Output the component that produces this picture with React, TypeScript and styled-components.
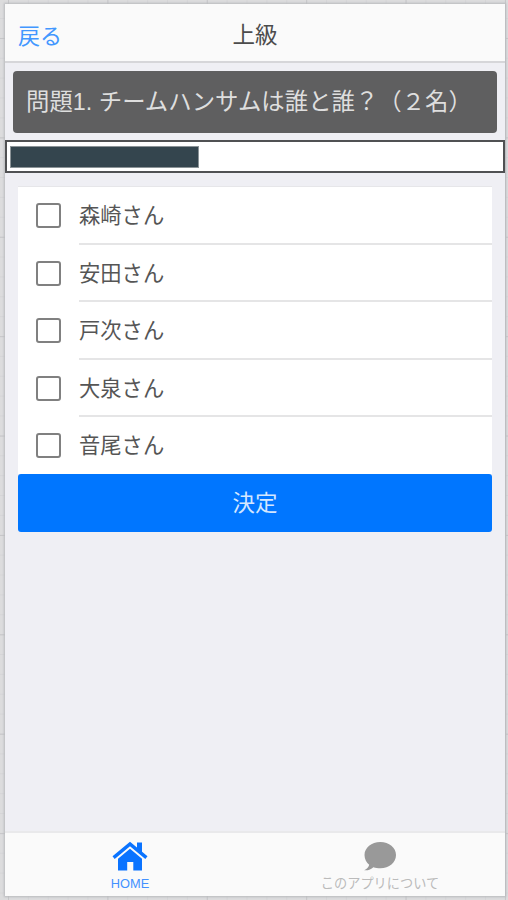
import React, { useState } from "react";
import styled, { createGlobalStyle } from "styled-components";

const GlobalStyle = createGlobalStyle`
  * { box-sizing: border-box; }
  body {
    margin: 0;
    background: #dcdcde;
    font-family: "Liberation Sans", "Noto Sans CJK JP", sans-serif;
    font-weight: 400;
  }
  button { font: inherit; border: 0; background: none; padding: 0; margin: 0; }
`;

const Desk = styled.div`
  width: 508px;
  height: 900px;
  padding: 4px 3px 4px 5px;
  background-color: #dcdcdd;
  background-image:
    linear-gradient(to bottom, #c6c6c8 1px, transparent 1px),
    linear-gradient(to right, #c6c6c8 1px, transparent 1px),
    linear-gradient(to bottom, #d5d5d7 1px, transparent 1px),
    linear-gradient(to right, #d5d5d7 1px, transparent 1px);
  background-size: 100% 99.4px, 99.4px 100%, 100% 19.88px, 19.88px 100%;
  background-position: 0 38px, 8px 0, 0 18px, 8px 0;
  overflow: hidden;
`;

const Screen = styled.main`
  display: flex;
  flex-direction: column;
  height: 892px;
  background: #efeff4;
  box-shadow: 0 0 2px 1px #b9babd;
`;

const NavBar = styled.header`
  display: grid;
  grid-template-columns: 1fr auto 1fr;
  align-items: center;
  height: 59px;
  flex: none;
  padding: 6px 13px 0;
  background: #fafafa;
  border-bottom: 2px solid #d6d6d9;
  font-size: 22px;
  line-height: 30px;
`;

const BackButton = styled.button`
  justify-self: start;
  padding-top: 2px;
  color: #4297ff;
`;

const Title = styled.h1`
  margin: 0;
  font: inherit;
  font-size: 22.5px;
  color: #4c4c4c;
`;

const Question = styled.section`
  flex: none;
  height: 62px;
  margin: 8px 8px 7px;
  padding: 0 13px;
  border-radius: 4px;
  background: #5f5f60;
  color: #dedede;
  font-size: 23.4px;
  line-height: 62px;
  white-space: nowrap;
`;

const Progress = styled.div`
  flex: none;
  height: 33px;
  padding: 4px 3px;
  border: 2px solid #505153;
  background: #fff;
`;

const ProgressFill = styled.div`
  width: 189px;
  height: 22px;
  border: 1px solid #8b9397;
  background: #34454e;
`;

const Answers = styled.form`
  flex: 1;
  padding: 13px 13px 0;
`;

const List = styled.ul`
  list-style: none;
  margin: 0;
  padding: 0;
  height: 288px;
  border-top: 1px solid #e6e6e9;
  background: #fff;
  display: grid;
  grid-template-rows: repeat(5, 57.5px);
`;

const Option = styled.li`
  display: flex;
  align-items: stretch;
  padding-left: 18px;
`;

const CheckBox = styled.button<{ $checked: boolean }>`
  align-self: center;
  flex: none;
  width: 25px;
  height: 25px;
  margin-right: 18px;
  border: 2px solid #808080;
  border-radius: 3px;
  background: ${(p) => (p.$checked ? "#0076ff" : "#fff")};
`;

const OptionLabel = styled.span<{ $last: boolean }>`
  flex: 1;
  padding-top: 2px;
  font-size: 21.3px;
  line-height: 54px;
  color: #555;
  border-bottom: ${(p) => (p.$last ? "0" : "2px solid #e5e5e6")};
`;

const Submit = styled.button`
  display: block;
  width: 100%;
  height: 58px;
  padding-top: 2px;
  border-radius: 3px;
  background: #0076ff;
  color: #d4e7ff;
  font-size: 22.5px;
  line-height: 56px;
  text-align: center;
`;

const TabBar = styled.nav`
  display: grid;
  grid-template-columns: 1fr 1fr;
  flex: none;
  height: 65px;
  background: #fafafa;
  border-top: 2px solid #e9e9eb;
`;

const Tab = styled.button<{ $active?: boolean }>`
  display: flex;
  flex-direction: column;
  align-items: center;
  padding-top: 8px;
  color: ${(p) => (p.$active ? "#0a73ff" : "#999")};
`;

const TabLabel = styled.span<{ $muted?: boolean }>`
  margin-top: 4px;
  font-size: ${(p) => (p.$muted ? "13.2px" : "12.8px")};
  line-height: 16px;
  white-space: nowrap;
  color: ${(p) => (p.$muted ? "#bbb" : "#4391ff")};
`;

const names = ["森崎さん", "安田さん", "戸次さん", "大泉さん", "音尾さん"];

const HomeIcon = () => (
  <svg width="36" height="31" viewBox="0 0 36 31" fill="currentColor">
    <path d="M25 1.5h5v10.8l-5-4.2zM18 .8 35.5 15.3l-2.2 2.6L18 5.2 2.7 17.9.5 15.3z" />
    <path d="M18 7.8 30 17.8V29.5h-8.7v-8.4h-6.1v8.4H6V17.8z" />
  </svg>
);

const BubbleIcon = () => (
  <svg width="34" height="31" viewBox="0 0 34 31" fill="currentColor">
    <path d="M17.3 1C8.5 1 1.5 6.7 1.5 14c0 4.3 2.1 7.7 4.7 9.8C5.6 26 3.8 28.2 1.2 29.3c3.8.4 7-1.1 9.2-3.1 2.1.8 4.4 1.1 6.9 1.1C26.2 27.3 33 21.4 33 14S26.2 1 17.3 1z" />
  </svg>
);

export default function App() {
  const [picked, setPicked] = useState<string[]>([]);
  const toggle = (name: string) =>
    setPicked((now) => (now.includes(name) ? now.filter((n) => n !== name) : [...now, name]));

  return (
    <>
      <GlobalStyle />
      <Desk>
        <Screen lang="ja">
          <NavBar>
            <BackButton>戻る</BackButton>
            <Title>上級</Title>
          </NavBar>
          <Question>問題1. チームハンサムは誰と誰？（２名）</Question>
          <Progress>
            <ProgressFill />
          </Progress>
          <Answers>
            <List>
              {names.map((name, i) => (
                <Option key={name}>
                  <CheckBox
                    type="button"
                    role="checkbox"
                    aria-label={name}
                    aria-checked={picked.includes(name)}
                    $checked={picked.includes(name)}
                    onClick={() => toggle(name)}
                  />
                  <OptionLabel $last={i === names.length - 1}>{name}</OptionLabel>
                </Option>
              ))}
            </List>
            <Submit type="button">決定</Submit>
          </Answers>
          <TabBar>
            <Tab $active>
              <HomeIcon />
              <TabLabel>HOME</TabLabel>
            </Tab>
            <Tab>
              <BubbleIcon />
              <TabLabel $muted>このアプリについて</TabLabel>
            </Tab>
          </TabBar>
        </Screen>
      </Desk>
    </>
  );
}
